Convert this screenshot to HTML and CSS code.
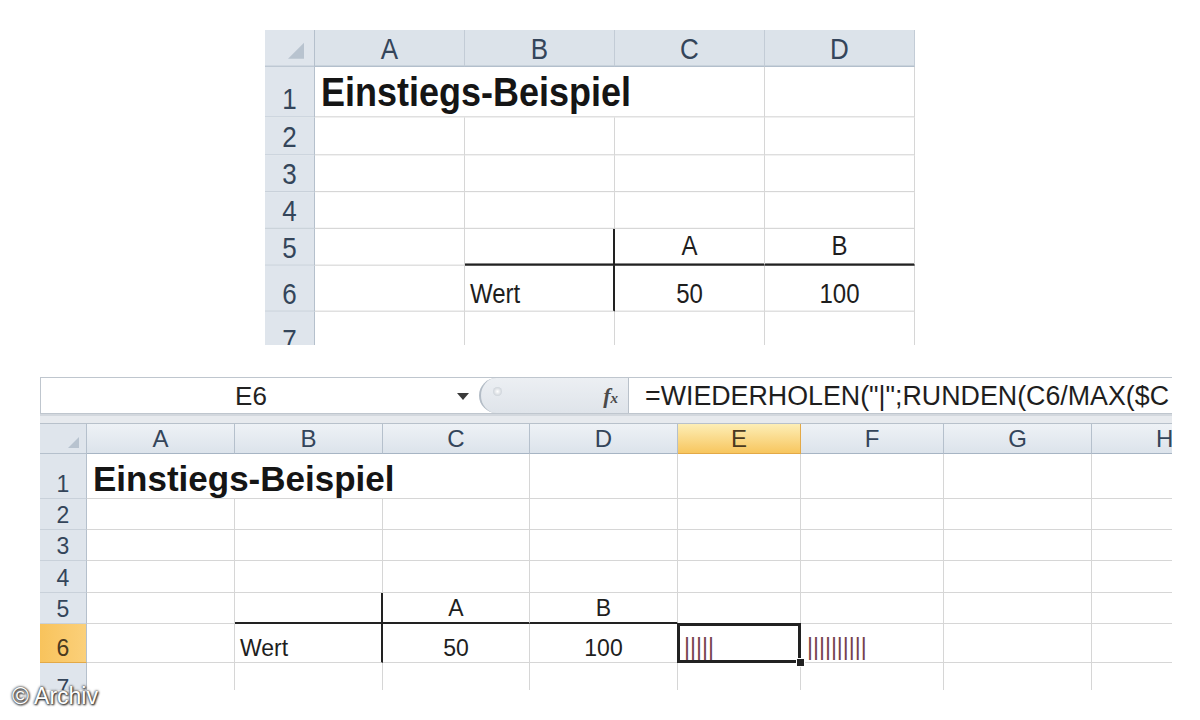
FILE: index.html
```html
<!DOCTYPE html>
<html lang="de">
<head>
	<meta charset="UTF-8">
	<link rel="stylesheet" href="styles.css">
</head>
<body>
<div class="page">

<div class="shot">
	<div class="sheet small">
		<div class="corner"><span class="tri"></span></div>
		<div class="colhd">A</div><div class="colhd">B</div><div class="colhd">C</div><div class="colhd">D</div>

		<div class="rowhd">1</div>
		<div class="c title">Einstiegs-Beispiel</div><div class="c"></div>

		<div class="rowhd">2</div>
		<div class="c"></div><div class="c"></div><div class="c"></div><div class="c"></div>

		<div class="rowhd">3</div>
		<div class="c"></div><div class="c"></div><div class="c"></div><div class="c"></div>

		<div class="rowhd">4</div>
		<div class="c"></div><div class="c"></div><div class="c"></div><div class="c"></div>

		<div class="rowhd">5</div>
		<div class="c"></div><div class="c bb br"></div><div class="c bb ctr">A</div><div class="c bb ctr">B</div>

		<div class="rowhd">6</div>
		<div class="c"></div><div class="c br">Wert</div><div class="c ctr">50</div><div class="c ctr">100</div>

		<div class="rowhd">7</div>
		<div class="c"></div><div class="c"></div><div class="c"></div><div class="c"></div>
	</div>
</div>

<div class="excel">
	<div class="fbar">
		<div class="namebox"><span class="name">E6</span><span class="arrow"></span></div>
		<div class="knob"><span class="dot"></span><span class="fx">f<small>x</small></span></div>
		<div class="formula">=WIEDERHOLEN("|";RUNDEN(C6/MAX($C</div>
	</div>
	<div class="band"></div>

	<div class="sheet big">
		<div class="corner"><span class="tri"></span></div>
		<div class="colhd">A</div><div class="colhd">B</div><div class="colhd">C</div><div class="colhd">D</div>
		<div class="colhd sel">E</div><div class="colhd">F</div><div class="colhd">G</div><div class="colhd last">H</div>

		<div class="rowhd">1</div>
		<div class="c title">Einstiegs-Beispiel</div><div class="c"></div><div class="c"></div><div class="c"></div><div class="c"></div><div class="c"></div>

		<div class="rowhd">2</div>
		<div class="c"></div><div class="c"></div><div class="c"></div><div class="c"></div><div class="c"></div><div class="c"></div><div class="c"></div><div class="c"></div>

		<div class="rowhd">3</div>
		<div class="c"></div><div class="c"></div><div class="c"></div><div class="c"></div><div class="c"></div><div class="c"></div><div class="c"></div><div class="c"></div>

		<div class="rowhd">4</div>
		<div class="c"></div><div class="c"></div><div class="c"></div><div class="c"></div><div class="c"></div><div class="c"></div><div class="c"></div><div class="c"></div>

		<div class="rowhd">5</div>
		<div class="c"></div><div class="c bb br"></div><div class="c bb ctr">A</div><div class="c bb ctr">B</div><div class="c"></div><div class="c"></div><div class="c"></div><div class="c"></div>

		<div class="rowhd sel">6</div>
		<div class="c"></div><div class="c br">Wert</div><div class="c ctr">50</div><div class="c ctr">100</div>
		<div class="c bars active">|||||</div><div class="c bars">||||||||||</div><div class="c"></div><div class="c"></div>

		<div class="rowhd">7</div>
		<div class="c"></div><div class="c"></div><div class="c"></div><div class="c"></div><div class="c"></div><div class="c"></div><div class="c"></div><div class="c"></div>
	</div>
</div>

<div class="copy">© Archiv</div>
</div>
</body>
</html>
```

FILE: styles.css
```css
	html,body {
		margin: 0;
		background: #ffffff;
		font-family: "Liberation Sans", Arial, sans-serif;
		color: #1e1e1e;
	}
	.page {
		position: relative;
		width: 1200px;
		height: 720px;
		overflow: hidden;
	}

	/* upper picture: the same sheet, a bit stretched in height */
	.shot {
		margin-left: 265px;
		padding-top: 30px;
		height: 315px;
	}
	.sheet {
		display: grid;
		overflow: hidden;
	}
	.sheet.small {
		width: 650px;
		height: 274px;
		grid-template-columns: 50px repeat(4, 150px);
		grid-template-rows: 32.2px 44.3px 32.2px 32.2px 32.2px 32.2px 40px 40px;
		font-size: 24px;
		transform: scaleY(1.15);
		transform-origin: 0 0;
	}
	.sheet.big {
		width: 1132px;
		height: 266px;
		grid-template-columns: 47px 148px 148px 147px 148px 123px 143px 148px 148px;
		grid-template-rows: 30px 45px 31px 31px 32px 31px 39px 40px;
		font-size: 23px;
	}

	.c {
		box-sizing: border-box;
		display: flex;
		align-items: flex-end;
		padding: 0 5px 2px;
		border-right: 1px solid #d6d6d6;
		border-bottom: 1px solid #d6d6d6;
		white-space: nowrap;
		line-height: 1;
		min-width: 0;
	}
	.small .c { padding-bottom: 3px; }
	.c.ctr { justify-content: center; }
	.c.bb { border-bottom: 2px solid #222222; }
	.c.br { border-right: 2px solid #222222; }
	.c.title {
		grid-column: span 3;
		font-weight: bold;
		font-size: 35px;
		color: #151515;
		padding-left: 6px;
	}
	.small .c.title { font-size: 36px; }

	.corner, .colhd, .rowhd {
		box-sizing: border-box;
		display: flex;
		justify-content: center;
		color: #34455a;
		line-height: 1;
		border-right: 1px solid #b5c0cc;
		border-bottom: 1px solid #b5c0cc;
	}
	.corner {
		position: relative;
		background: #dfe5ec;
	}
	.tri {
		position: absolute;
		right: 7px;
		bottom: 5px;
		width: 0;
		height: 0;
		border-left: 11px solid transparent;
		border-bottom: 11px solid #b8c3cf;
	}
	.small .tri {
		right: 10px;
		bottom: 6px;
		border-left-width: 16px;
		border-bottom-width: 14px;
	}
	.colhd {
		align-items: center;
		background: linear-gradient(#eef2f6, #dce3eb);
		border-bottom-color: #a7b5c4;
	}
	.colhd.last { justify-content: flex-start; padding-left: 64px; }
	.small .colhd {
		font-size: 26px;
		background: #dce3ea;
		border-right-color: #c3ccd6;
	}
	.big .colhd { font-size: 24px; }
	.rowhd {
		align-items: flex-end;
		padding-bottom: 2px;
		background: #dfe5ec;
		border-bottom-color: #c9d1da;
	}
	.small .rowhd { font-size: 26px; padding-bottom: 2px; }
	.big .rowhd { font-size: 23px; }

	.colhd.sel {
		background: linear-gradient(#fdeeb6, #f7c65f);
		border-right-color: #e3a947;
		border-bottom-color: #e3a947;
		color: #4a3a20;
	}
	.rowhd.sel {
		background: linear-gradient(90deg, #f8c35c, #fbd07a);
		border-bottom-color: #e3a947;
		color: #4a3a20;
	}

	.c.bars {
		font-size: 23px;
		color: #74414d;
		padding: 0 6px 3px;
	}
	.c.active { position: relative; }
	.c.active::before {
		content: "";
		position: absolute;
		left: -1px;
		top: -1px;
		right: -1px;
		bottom: -1px;
		border: 3px solid #222222;
	}
	.c.active::after {
		content: "";
		position: absolute;
		right: -5px;
		bottom: -5px;
		width: 7px;
		height: 7px;
		background: #222222;
		border: 1px solid #ffffff;
	}

	.excel {
		margin: 32px 0 0 40px;
		width: 1132px;
	}
	.fbar {
		display: flex;
		height: 37px;
		box-sizing: border-box;
		border: 1px solid #bfc6ce;
		border-right: none;
		background: #ffffff;
		font-size: 26px;
		line-height: 1;
	}
	.namebox {
		display: flex;
		align-items: center;
		width: 438px;
	}
	.name {
		flex: 1;
		text-align: center;
		padding-left: 4px;
		color: #222222;
	}
	.arrow {
		width: 0;
		height: 0;
		margin: 2px 10px 0 0;
		border-left: 6px solid transparent;
		border-right: 6px solid transparent;
		border-top: 7px solid #3a3a3a;
	}
	.knob {
		position: relative;
		display: flex;
		align-items: center;
		justify-content: flex-end;
		width: 150px;
		box-sizing: border-box;
		padding-right: 10px;
		background: linear-gradient(#eceff3, #dfe4ea);
		border-left: 2px solid #b3bcc6;
		border-right: 1px solid #b9c1ca;
		border-radius: 18px 0 0 18px;
	}
	.dot {
		position: absolute;
		left: 12px;
		top: 9px;
		width: 9px;
		height: 9px;
		border-radius: 50%;
		background: radial-gradient(#ffffff, #b9c1ca);
	}
	.fx {
		font-family: "Liberation Serif", serif;
		font-style: italic;
		font-weight: bold;
		font-size: 22px;
		color: #4a4a4a;
	}
	.fx small { font-size: 15px; }
	.formula {
		flex: 1;
		overflow: hidden;
		white-space: nowrap;
		padding: 5px 0 0 16px;
		font-size: 26.8px;
		color: #1e1e1e;
	}
	.band {
		height: 10px;
		box-sizing: border-box;
		background: #e7eaee;
		border-top: 2px solid #d3d8de;
		border-bottom: 1px solid #b8c1cb;
	}

	.copy {
		position: absolute;
		left: 12px;
		top: 685px;
		font-size: 23px;
		line-height: 1;
		color: #ffffff;
		text-shadow: 0 0 2px #3a3a3a, 0 0 3px #3a3a3a, 1px 1px 2px #222222;
	}
```
